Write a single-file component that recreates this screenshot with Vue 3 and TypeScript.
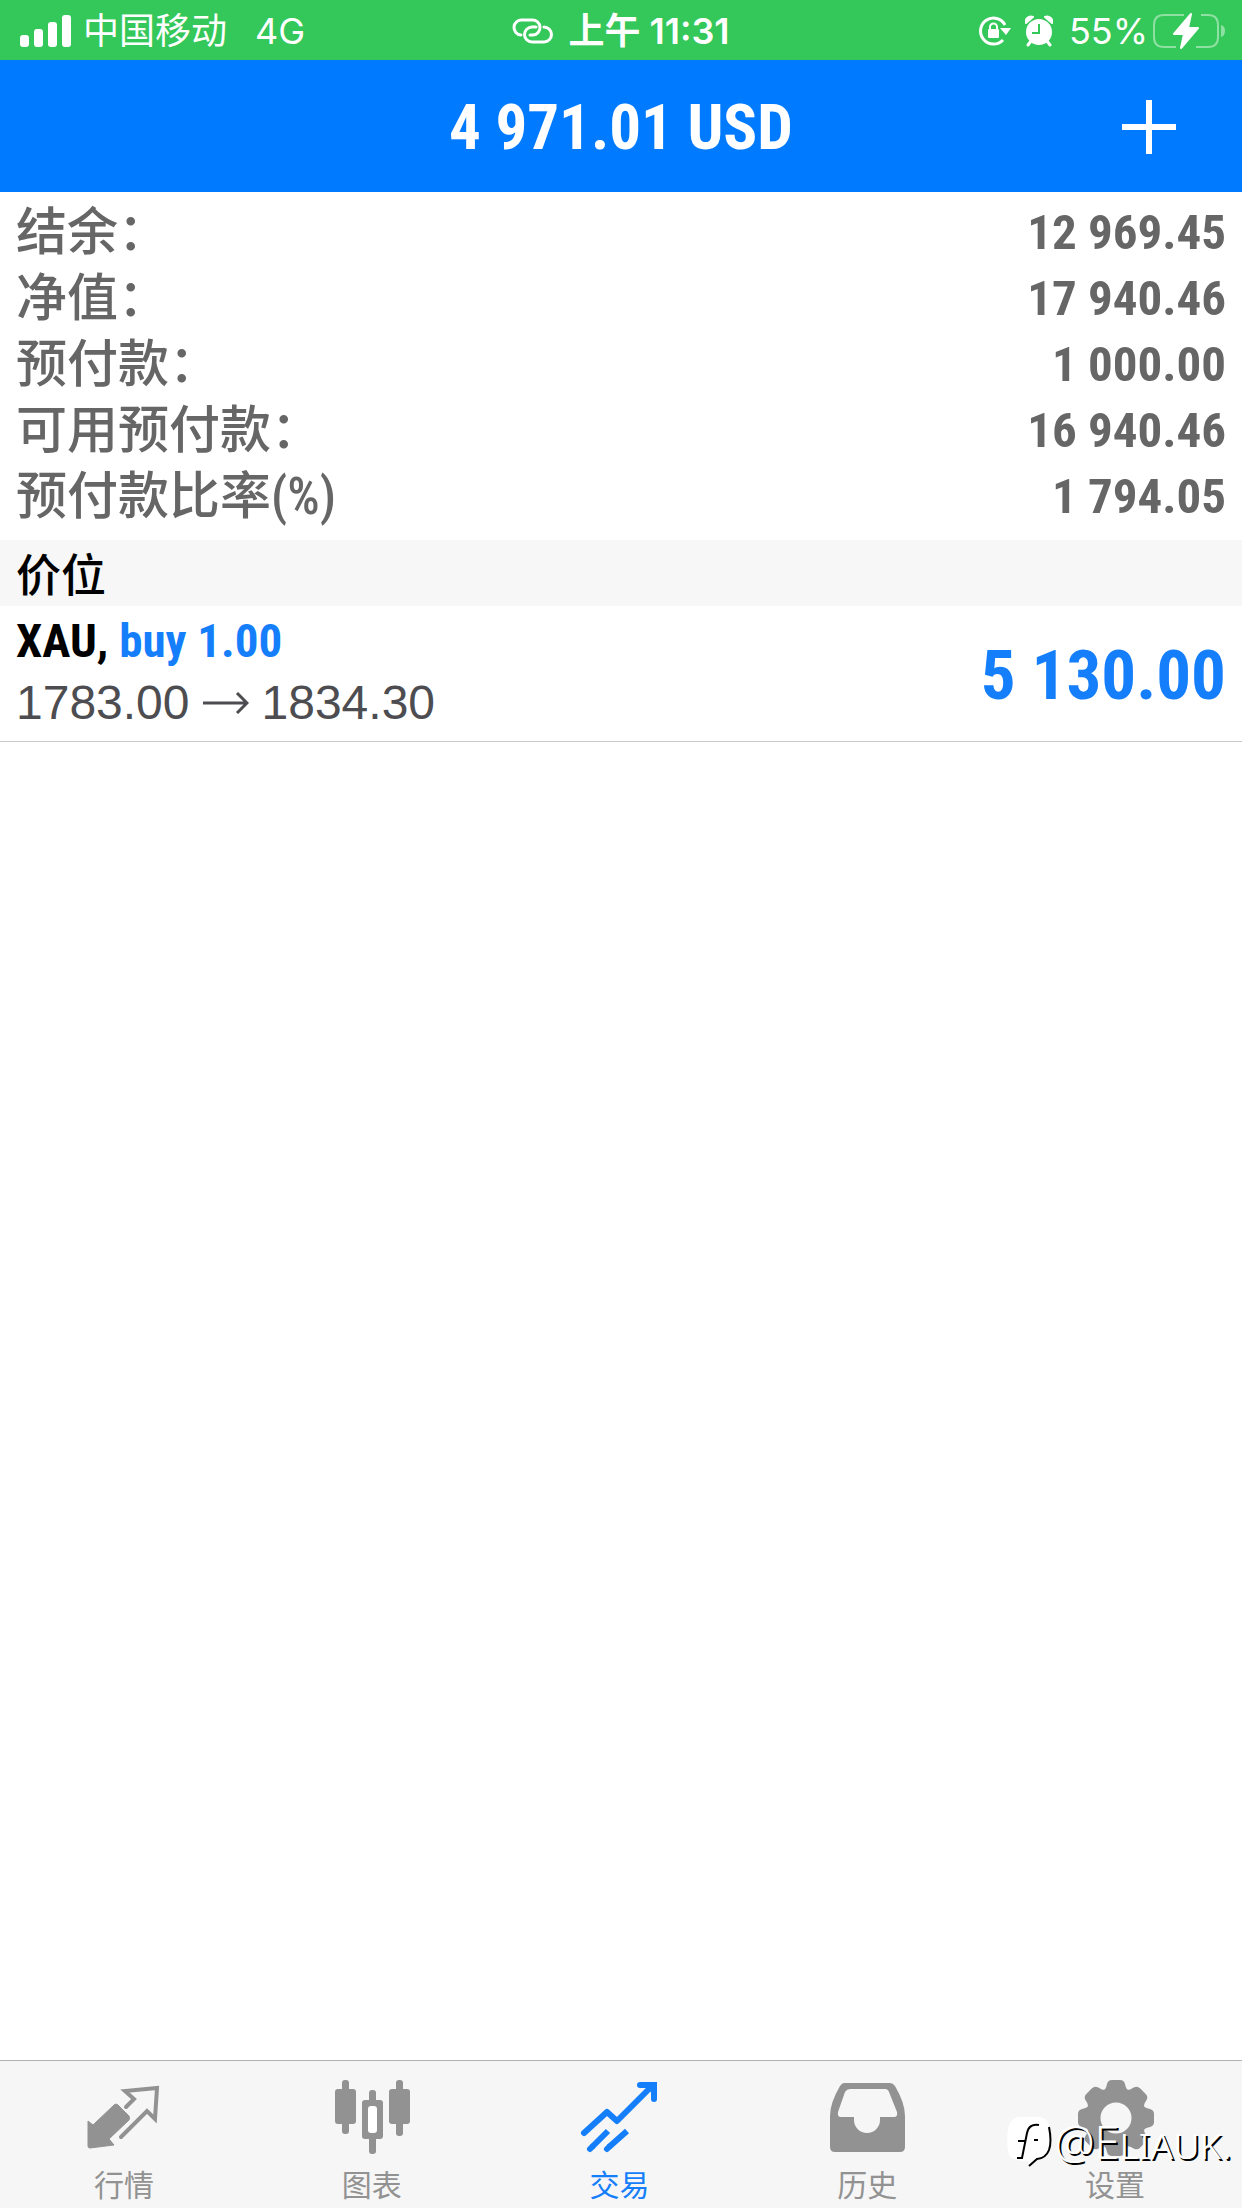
<script setup lang="ts">
import { ref } from 'vue'

interface SummaryRow {
  label: string
  value: string
}

interface Tab {
  id: string
  label: string
}

const summary: SummaryRow[] = [
  { label: '结余：', value: '12 969.45' },
  { label: '净值：', value: '17 940.46' },
  { label: '预付款：', value: '1 000.00' },
  { label: '可用预付款：', value: '16 940.46' },
  { label: '预付款比率(%)', value: '1 794.05' },
]

const tabs: Tab[] = [
  { id: 'quotes', label: '行情' },
  { id: 'charts', label: '图表' },
  { id: 'trade', label: '交易' },
  { id: 'history', label: '历史' },
  { id: 'settings', label: '设置' },
]

const active = ref('trade')
const gearTeeth = [0, 45, 90, 135, 180, 225, 270, 315]
</script>

<template>
  <div class="screen">
    <div class="status">
      <div class="status-left">
        <svg viewBox="0 0 52 34" width="52" height="34" fill="#fff">
          <rect x="0" y="21" width="9" height="12" rx="3" />
          <rect x="14" y="15" width="9" height="18" rx="3" />
          <rect x="28" y="8" width="9" height="25" rx="3" />
          <rect x="42" y="1" width="9" height="32" rx="3" />
        </svg>
        <span class="carrier">中国移动</span>
        <span class="network">4G</span>
      </div>
      <div class="status-mid">
        <svg viewBox="0 0 42 28" width="42" height="28" fill="none" stroke="#fff" stroke-width="3" stroke-linecap="round">
          <path d="M9 18 A7.500 7.500 0 0 1 10 3 H20 A7.500 7.500 0 0 1 21 18 H18" />
          <path d="M32 10 A7.500 7.500 0 0 1 32 25 H20 A7.500 7.500 0 0 1 20 10 H24" />
        </svg>
        <span class="time">上午 11:31</span>
      </div>
      <div class="status-right">
        <svg viewBox="0 0 34 32" width="34" height="32">
          <path d="M27 10 A13 13 0 1 0 25 25" fill="none" stroke="#fff" stroke-width="3" />
          <path d="M22 13 H33 L28 20 Z" fill="#fff" />
          <rect x="10" y="14" width="11" height="9" rx="1" fill="#fff" />
          <path d="M12 15 V12 a3.500 3.500 0 0 1 7 0 V15" fill="none" stroke="#fff" stroke-width="2" />
        </svg>
        <svg class="alarm" viewBox="0 0 28 32" width="28" height="32">
          <circle cx="14" cy="17" r="13" fill="#fff" />
          <path d="M1 8 A5 5 0 0 1 8 2 Z M27 8 A5 5 0 0 0 20 2 Z" fill="#fff" stroke="#fff" stroke-width="2" stroke-linejoin="round" />
          <path d="M6 26 L3 30 M22 26 L25 30" stroke="#fff" stroke-width="3" stroke-linecap="round" />
          <path d="M14 9 V18 H7" fill="none" stroke="#34c759" stroke-width="2" />
        </svg>
        <span class="percent">55%</span>
        <svg viewBox="0 0 74 38" width="74" height="38">
          <path d="M32 3 H12 Q2 3 2 13 V25 Q2 35 12 35 H24 M44 35 H56 Q66 35 66 25 V13 Q66 3 56 3 H49" fill="none" stroke="#8fe0a3" stroke-width="2" />
          <path d="M69 13 Q73 14 73 19 Q73 24 69 25 Z" fill="#8fe0a3" />
          <path d="M39 2 L22 22 H32 L29 36 L46 16 H36 Z" fill="#fff" stroke="#fff" stroke-width="2" stroke-linejoin="round" />
        </svg>
      </div>
    </div>

    <header class="titlebar">
      <h1>4 971.01 USD</h1>
      <button class="add" type="button" aria-label="+">
        <svg viewBox="0 0 54 54" width="54" height="54" fill="#fff">
          <rect x="24" y="0" width="6" height="54" />
          <rect x="0" y="24" width="54" height="6" />
        </svg>
      </button>
    </header>

    <main>
      <dl class="summary">
        <div v-for="row in summary" :key="row.label" class="summary-row">
          <dt>{{ row.label }}</dt>
          <dd>{{ row.value }}</dd>
        </div>
      </dl>

      <h2>价位</h2>

      <div class="position">
        <div class="position-info">
          <div class="symbol">XAU, <span class="side">buy 1.00</span></div>
          <div class="prices">
            <span>1783.00</span>
            <svg viewBox="0 0 46 22" width="46" height="22" fill="none" stroke="#4d4d51" stroke-width="3">
              <path d="M0 11 H44 M34 1 L44 11 L34 21" />
            </svg>
            <span>1834.30</span>
          </div>
        </div>
        <div class="profit">5 130.00</div>
      </div>
    </main>

    <nav class="tabs">
      <button
        v-for="tab in tabs"
        :key="tab.id"
        type="button"
        class="tab"
        :class="{ active: tab.id === active }"
        @click="active = tab.id"
      >
        <svg viewBox="0 0 80 78" width="80" height="78" fill="currentColor">
          <g v-if="tab.id === 'quotes'">
            <path d="M4 43 L9 47 L30 27 Q32 25 34 27 L45 38 Q46 40 45 42 L25 61 L30 67 L6 70 Q4 70 4 68 Z" stroke="currentColor" stroke-width="1" stroke-linejoin="round" />
            <path d="M42 29 L50 21 L41 13 L73 10 L71 41 L63 33 L37 59" fill="none" stroke="currentColor" stroke-width="4" stroke-linecap="round" />
          </g>
          <g v-else-if="tab.id === 'charts'">
            <rect x="10" y="2" width="7" height="54" rx="3" />
            <rect x="3" y="11" width="21" height="35" rx="3" />
            <rect x="37" y="12" width="7" height="64" rx="3" />
            <rect x="30" y="22" width="21" height="39" rx="3" />
            <rect x="36" y="28" width="9" height="27" rx="3" fill="#fff" />
            <rect x="64" y="2" width="7" height="56" rx="3" />
            <rect x="57" y="11" width="21" height="35" rx="3" />
          </g>
          <g v-else-if="tab.id === 'trade'" fill="none" stroke="currentColor" stroke-width="6" stroke-linejoin="round">
            <path d="M5 55 L28 34 L38 43 L73 8" stroke-linecap="round" />
            <path d="M61 7 H75 V21" stroke-linecap="round" stroke-linejoin="miter" />
            <path d="M65 7 H75 V17 Z" fill="currentColor" stroke="none" />
            <path d="M13 69 L29 53 M30 69 L48 53" />
            <path d="M11 71 L13 69 M28 71 L30 69" stroke-linecap="round" />
          </g>
          <path
            v-else-if="tab.id === 'history'"
            fill-rule="evenodd"
            d="M17 5 H63 Q66 5 68 8 Q78 25 78 38 V69 Q78 74 73 74 H8 Q3 74 3 69 V38 Q3 25 13 8 Q15 5 17 5 Z M23 11 Q20 11 18 14 L11 34 Q10 39 14 39 H27 V42 A13 13 0 0 0 53 42 V39 H67 Q71 39 70 34 L62 14 Q61 11 58 11 Z"
          />
          <g v-else transform="translate(41 40)">
            <path
              v-for="angle in gearTeeth"
              :key="angle"
              :transform="`rotate(${angle})`"
              d="M-14 -26 Q-10 -28 -9 -34 Q-8 -38 -4 -38 H4 Q8 -38 9 -34 Q10 -28 14 -26 Z"
            />
            <circle r="23" fill="none" stroke="currentColor" stroke-width="15" />
          </g>
        </svg>
        <span>{{ tab.label }}</span>
      </button>

      <div class="watermark">
        <svg viewBox="0 0 48 54" width="48" height="54">
          <path d="M12 2 H32 Q43 3 43 16 V28 Q42 43 30 44 L23 52 L21 46 Q7 46 2 40 Q-1 30 1 14 Q3 3 12 2 Z" fill="#fff" />
          <path d="M32 10 Q22 8 20 18 L15 43 H10 M11 26 H18 M27 25 H31 M42 12 Q48 42 30 44 L22 51" fill="none" stroke="#000" stroke-width="2" />
        </svg>
        <span>@Eliauk.</span>
      </div>
    </nav>
  </div>
</template>

<style>
body {
  margin: 0;
  background: #fff;
}
</style>

<style scoped>
.screen {
  display: flex;
  flex-direction: column;
  min-height: 100vh;
  font-family: "Liberation Sans", "Noto Sans CJK SC", sans-serif;
}

button {
  padding: 0;
  border: 0;
  background: none;
  font: inherit;
}

svg {
  display: block;
  flex: none;
}

.status {
  display: grid;
  grid-template-columns: 1fr auto 1fr;
  align-items: center;
  height: 60px;
  padding: 0 16px 0 20px;
  background: #34c759;
  color: #fff;
  font-family: Inter, "Noto Sans CJK SC", sans-serif;
  font-size: 36px;
  line-height: 62px;
}

.status-left,
.status-mid,
.status-right {
  display: flex;
  align-items: center;
}

.carrier {
  margin-left: 11px;
}

.network {
  margin-left: 28px;
}

.status-mid {
  gap: 14px;
  padding-right: 4px;
}

.time {
  font-weight: 600;
}

.status-right {
  justify-content: flex-end;
}

.alarm {
  margin: 0 16px 0 13px;
}

.percent {
  margin-right: 4px;
}

.titlebar {
  display: grid;
  grid-template-columns: 1fr auto 1fr;
  align-items: center;
  height: 132px;
  background: #007aff;
  color: #fff;
}

.titlebar h1 {
  grid-column: 2;
  margin: 0;
  font-family: "Roboto Condensed", "Liberation Sans Narrow", sans-serif;
  font-size: 63px;
  font-weight: 700;
  line-height: 136px;
}

.add {
  justify-self: end;
  margin: 0 66px 2px 0;
}

main {
  flex: 1;
}

.summary {
  margin: 0;
  padding: 7px 16px 11px;
  color: #666;
}

.summary-row {
  display: flex;
  justify-content: space-between;
  height: 66px;
}

.summary-row dt {
  font-family: "Roboto Condensed", "Noto Sans CJK SC", sans-serif;
  font-size: 51px;
  font-weight: 500;
  line-height: 68px;
}

.summary-row dd {
  margin: 0;
  font-family: "Roboto Condensed", "Liberation Sans Narrow", sans-serif;
  font-size: 49px;
  font-weight: 700;
  line-height: 68px;
}

h2 {
  margin: 0;
  padding: 0 16px;
  background: #f7f7f7;
  color: #000;
  font-family: "Noto Sans CJK SC", sans-serif;
  font-size: 45px;
  font-weight: 500;
  line-height: 66px;
}

.position {
  display: flex;
  justify-content: space-between;
  height: 135px;
  padding: 0 16px;
  border-bottom: 1px solid #c8c7cc;
}

.position-info {
  padding-top: 4px;
}

.symbol {
  color: #000;
  font-family: "Roboto Condensed", "Liberation Sans Narrow", sans-serif;
  font-size: 47px;
  font-weight: 700;
  line-height: 62px;
}

.side,
.profit {
  color: #147efb;
}

.prices {
  display: flex;
  align-items: center;
  gap: 13px;
  color: #4d4d51;
  font-size: 48px;
  line-height: 62px;
}

.profit {
  font-family: "Roboto Condensed", "Liberation Sans Narrow", sans-serif;
  font-size: 69px;
  font-weight: 700;
  line-height: 139px;
}

.tabs {
  position: relative;
  display: grid;
  grid-template-columns: repeat(5, 1fr);
  height: 147px;
  padding-right: 3px;
  border-top: 1px solid #b2b2b2;
  background: #f6f6f6;
}

.tab {
  display: flex;
  flex-direction: column;
  align-items: center;
  padding-top: 17px;
  color: #929292;
  font-family: "Noto Sans CJK SC", sans-serif;
  font-size: 30px;
  line-height: 54px;
}

.tab.active {
  color: #147efb;
}

.watermark {
  position: absolute;
  right: 10px;
  bottom: 38px;
  display: flex;
  align-items: center;
  color: #fff;
  font-family: "Noto Sans", sans-serif;
  font-size: 45px;
  font-weight: 300;
  font-variant: small-caps;
  line-height: 56px;
  text-shadow: 2px 2px 0 #000;
}
</style>
